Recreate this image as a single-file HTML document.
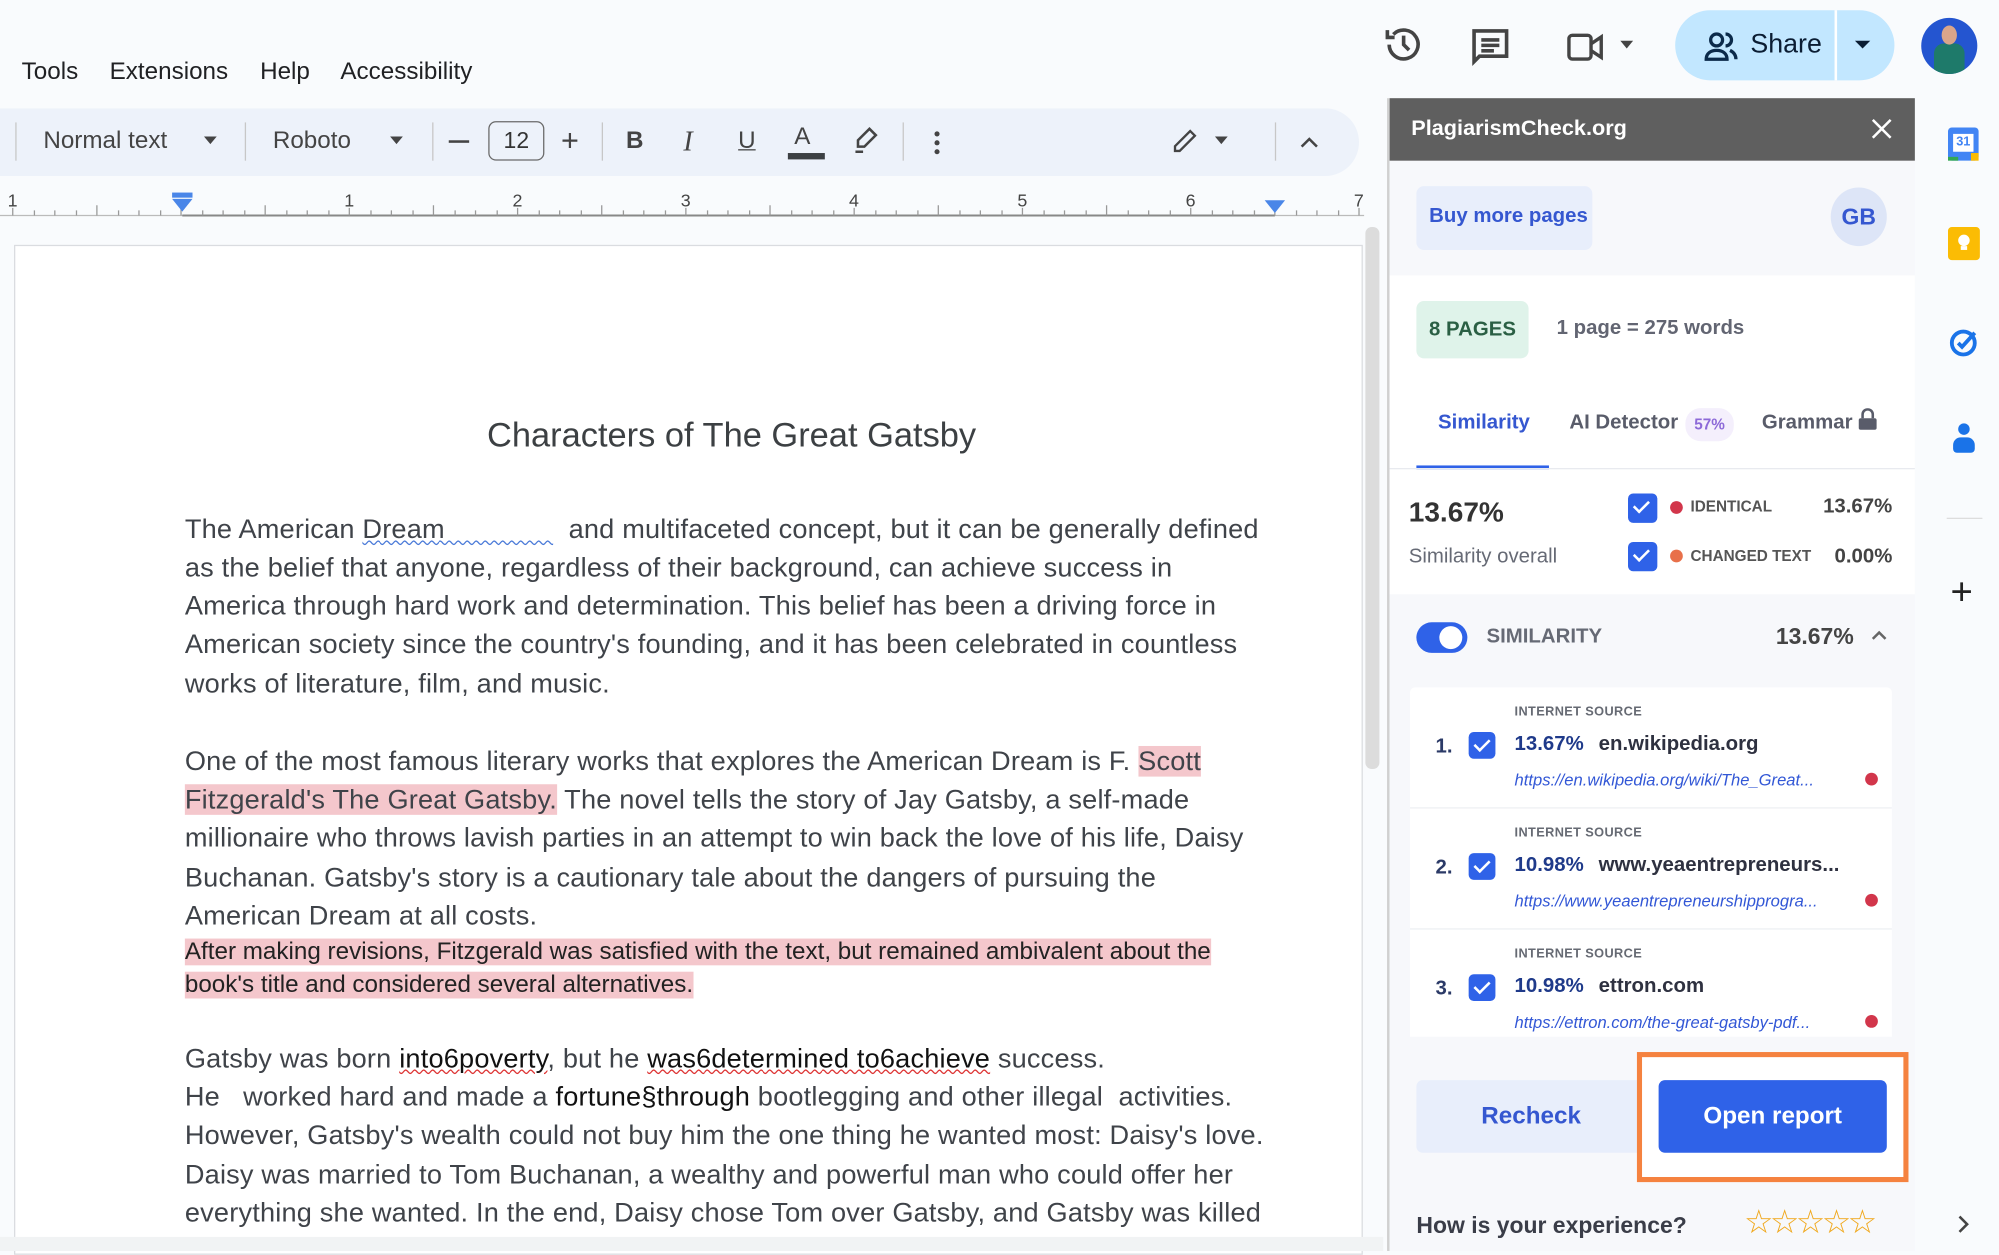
<!DOCTYPE html>
<html><head><meta charset="utf-8"><style>
html,body{margin:0;padding:0;width:1999px;height:1251px;overflow:hidden;background:#f9fbfd;}
#w{position:absolute;left:0;top:0;width:1568px;height:981px;transform:scale(1.27487,1.2752);transform-origin:0 0;font-family:"Liberation Sans",Arial,sans-serif;color:#3c4043;}
.a{position:absolute;white-space:nowrap;}
.ln{position:absolute;left:145px;font-size:21.3px;letter-spacing:0.15px;color:#3f4349;white-space:nowrap;}
.hl{background:#f4c7cc;}
.tb{position:absolute;top:111px;font-size:19px;color:#444;transform:translateY(-50%);}
.sep{position:absolute;top:96px;width:1px;height:30px;background:#c7c7c7;}
.cb{position:absolute;width:21px;height:21px;border-radius:4px;background:#2f62e8;}
.cb:after{content:"";position:absolute;left:7px;top:3px;width:5px;height:10px;border:solid #fff;border-width:0 2.5px 2.5px 0;transform:rotate(45deg);}
.src{position:absolute;left:1106px;width:378px;height:94px;background:#fff;border-bottom:1px solid #eceef2;}
.srcl{position:absolute;left:82px;top:14px;font-size:10px;font-weight:bold;color:#666a73;letter-spacing:.3px;}
.num{position:absolute;left:20px;top:38px;font-size:16px;font-weight:bold;color:#2b3a67;}
.pc{position:absolute;left:82px;top:36px;font-size:16px;font-weight:bold;color:#1f3a8a;}
.dom{position:absolute;left:148px;top:36px;font-size:16px;font-weight:bold;color:#2e3140;}
.url{position:absolute;left:82px;top:65px;font-size:13px;font-style:italic;color:#3257d6;}
.rd{position:absolute;left:357px;top:67px;width:10px;height:10px;border-radius:50%;background:#d2364b;}
</style></head><body><div id="w">
<div class="a" style="left:17px;top:46px;font-size:19px;color:#202124;">Tools</div>
<div class="a" style="left:86px;top:46px;font-size:19px;color:#202124;">Extensions</div>
<div class="a" style="left:204px;top:46px;font-size:19px;color:#202124;">Help</div>
<div class="a" style="left:267px;top:46px;font-size:19px;color:#202124;">Accessibility</div>
<svg class="a" style="left:1084px;top:18px" width="34" height="34" viewBox="0 0 24 24" fill="none" stroke="#444" stroke-width="2"><path d="M4 12a8 8 0 1 0 2.3-5.7"/><path d="M3 4v4h4"/><path d="M12 7v5l3 3"/></svg>
<svg class="a" style="left:1152px;top:20px" width="34" height="34" viewBox="0 0 24 24" fill="none" stroke="#444" stroke-width="2"><path d="M3 3h18v14H6l-3 3z" fill="none"/><path d="M7 8h10M7 11h10M7 14h7"/></svg>
<svg class="a" style="left:1228px;top:22px" width="32" height="30" viewBox="0 0 24 22" fill="none" stroke="#444" stroke-width="2"><rect x="2" y="4" width="13" height="14" rx="2"/><path d="M15 9l6-4v12l-6-4"/></svg>
<div class="a" style="left:1271px;top:32px;border:5px solid transparent;border-top:6px solid #444;"></div>
<div class="a" style="left:1314px;top:8px;width:172px;height:55px;border-radius:28px;background:#c2e7ff;"></div>
<div class="a" style="left:1439px;top:8px;width:2px;height:55px;background:#fff;"></div>
<svg class="a" style="left:1336px;top:23px" width="28" height="26" viewBox="0 0 24 22" fill="none" stroke="#0b2a4a" stroke-width="2.2"><circle cx="9" cy="7" r="4"/><path d="M2 20c0-4 3-6 7-6s7 2 7 6z"/><path d="M15 3a4 4 0 0 1 0 8M18 14c2 1 4 3 4 6"/></svg>
<div class="a" style="left:1373px;top:23px;font-size:21px;color:#0b1d33;">Share</div>
<div class="a" style="left:1455px;top:32px;border:6px solid transparent;border-top:6px solid #0b1d33;"></div>
<div class="a" style="left:1507px;top:14px;width:44px;height:44px;border-radius:50%;background:#2455d0;overflow:hidden;"><div style="position:absolute;left:10px;top:20px;width:24px;height:26px;border-radius:8px 8px 0 0;background:#1e7a6a;"></div><div style="position:absolute;left:16px;top:6px;width:12px;height:15px;border-radius:50%;background:#d9a58a;"></div></div>
<div class="a" style="left:0;top:85px;width:1066px;height:53px;background:#edf2fa;border-radius:0 27px 27px 0;"></div>
<div class="sep" style="left:12px"></div>
<div class="tb" style="left:34px">Normal text</div>
<div class="a" style="left:160px;top:107px;border:5px solid transparent;border-top:6px solid #444;"></div>
<div class="sep" style="left:192px"></div>
<div class="tb" style="left:214px">Roboto</div>
<div class="a" style="left:306px;top:107px;border:5px solid transparent;border-top:6px solid #444;"></div>
<div class="sep" style="left:339px"></div>
<div class="a" style="left:352px;top:110px;width:16px;height:2px;background:#444;"></div>
<div class="a" style="left:383px;top:95px;width:44px;height:31px;border:1.5px solid #6a6a6a;border-radius:6px;box-sizing:border-box;font-size:18px;text-align:center;line-height:28px;color:#333;">12</div>
<div class="tb" style="left:440px;font-size:24px">+</div>
<div class="sep" style="left:472px"></div>
<div class="tb" style="left:491px;font-weight:bold;">B</div>
<div class="tb" style="left:536px;font-style:italic;font-family:'Liberation Serif',serif;font-size:22px;">I</div>
<div class="tb" style="left:579px;text-decoration:underline;">U</div>
<div class="tb" style="left:623px;top:108px;">A</div>
<div class="a" style="left:618px;top:120px;width:29px;height:5px;background:#3c4043;"></div>
<svg class="a" style="left:667px;top:98px" width="24" height="24" viewBox="0 0 24 24" fill="none" stroke="#444" stroke-width="2"><path d="M15 3l5 5-9 9H6v-5z"/><path d="M4 21h6"/></svg>
<div class="sep" style="left:708px"></div>
<div class="a" style="left:733px;top:103px;width:4px;height:4px;border-radius:50%;background:#444;box-shadow:0 7px 0 #444,0 14px 0 #444;"></div>
<svg class="a" style="left:918px;top:100px" width="22" height="22" viewBox="0 0 24 24" fill="none" stroke="#444" stroke-width="2"><path d="M17 3l4 4L8 20H4v-4z"/></svg>
<div class="a" style="left:953px;top:107px;border:5px solid transparent;border-top:6px solid #444;"></div>
<div class="sep" style="left:1000px"></div>
<svg class="a" style="left:1018px;top:104px" width="18" height="14" viewBox="0 0 18 14" fill="none" stroke="#444" stroke-width="2"><path d="M3 11l6-6 6 6"/></svg>
<div class="a" style="left:0;top:143px;width:1075px;height:30px;">
<svg width="1075" height="30">
<line x1="0" y1="26" x2="1070" y2="26" stroke="#bbb" stroke-width="1"/>
<line x1="143" y1="26" x2="1000" y2="26" stroke="#888" stroke-width="1.5"/>
<g stroke="#999" stroke-width="1">
<path d="M10 20v6M27 22v4M43 22v4M60 22v4M76 18v8M93 22v4M109 22v4M126 22v4M142 20v6M159 22v4M175 22v4M192 22v4M208 18v8M225 22v4M241 22v4M258 22v4M274 20v6M291 22v4M307 22v4M324 22v4M340 18v8M357 22v4M373 22v4M390 22v4M406 20v6M423 22v4M439 22v4M456 22v4M472 18v8M489 22v4M505 22v4M522 22v4M538 20v6M555 22v4M571 22v4M588 22v4M604 18v8M621 22v4M637 22v4M654 22v4M670 20v6M687 22v4M703 22v4M720 22v4M736 18v8M753 22v4M769 22v4M786 22v4M802 20v6M819 22v4M835 22v4M852 22v4M868 18v8M885 22v4M901 22v4M918 22v4M934 20v6M951 22v4M967 22v4M984 22v4M1000 18v8M1017 22v4M1033 22v4M1050 22v4M1066 20v6"/>
</g>
<g font-size="14" fill="#444" font-family="Liberation Sans"><text x="6" y="19">1</text><text x="270" y="19">1</text><text x="402" y="19">2</text><text x="534" y="19">3</text><text x="666" y="19">4</text><text x="798" y="19">5</text><text x="930" y="19">6</text><text x="1062" y="19">7</text></g>
<rect x="135" y="8" width="16" height="4" fill="#4a86e8"/><path d="M135 13h16l-8 10z" fill="#4a86e8"/>
<path d="M992 14h16l-8 10z" fill="#4a86e8"/>
</svg></div>
<div class="a" style="left:11px;top:192px;width:1056px;height:790px;background:#fff;border:1px solid #dadce0;"></div>
<div class="a" style="left:1071px;top:178px;width:11px;height:425px;background:#dcdcdc;border-radius:5px;"></div>
<div class="a" style="left:382px;top:326px;font-size:27px;color:#3c4043;">Characters of The Great Gatsby</div>
<div class="ln" style="top:403px">The American <span style="text-decoration:underline wavy #4a7ad8;text-decoration-thickness:1px;">Dream&nbsp;&nbsp;&nbsp;&nbsp;&nbsp;&nbsp;&nbsp;&nbsp;&nbsp;&nbsp;&nbsp;&nbsp;&nbsp;&nbsp;</span>&nbsp;&nbsp;and multifaceted concept, but it can be generally defined</div>
<div class="ln" style="top:433px">as the belief that anyone, regardless of their background, can achieve success in</div>
<div class="ln" style="top:463px">America through hard work and determination. This belief has been a driving force in</div>
<div class="ln" style="top:493px">American society since the country's founding, and it has been celebrated in countless</div>
<div class="ln" style="top:524px">works of literature, film, and music.</div>
<div class="ln" style="top:585px">One of the most famous literary works that explores the American Dream is F. <span class="hl">Scott</span></div>
<div class="ln" style="top:615px"><span class="hl">Fitzgerald's The Great Gatsby.</span> The novel tells the story of Jay Gatsby, a self-made</div>
<div class="ln" style="top:645px">millionaire who throws lavish parties in an attempt to win back the love of his life, Daisy</div>
<div class="ln" style="top:676px">Buchanan. Gatsby's story is a cautionary tale about the dangers of pursuing the</div>
<div class="ln" style="top:706px">American Dream at all costs.</div>
<div class="ln" style="top:736px;font-size:19px;letter-spacing:0;color:#222;"><span class="hl">After making revisions, Fitzgerald was satisfied with the text, but remained ambivalent about the</span></div>
<div class="ln" style="top:762px;font-size:19px;letter-spacing:0;color:#222;"><span class="hl">book's title and considered several alternatives.</span></div>
<div class="ln" style="top:818px">Gatsby was born <span style="color:#111;text-decoration:underline wavy #d33;text-decoration-thickness:1px;">into6poverty</span>, but he <span style="color:#111;text-decoration:underline wavy #d33;text-decoration-thickness:1px;">was6determined to6achieve</span> success.</div>
<div class="ln" style="top:848px">He &nbsp;&nbsp;worked hard and made a <span style="color:#111">fortune§through</span> bootlegging and other illegal &nbsp;activities.</div>
<div class="ln" style="top:878px">However, Gatsby's wealth could not buy him the one thing he wanted most: Daisy's love.</div>
<div class="ln" style="top:909px">Daisy was married to Tom Buchanan, a wealthy and powerful man who could offer her</div>
<div class="ln" style="top:939px">everything she wanted. In the end, Daisy chose Tom over Gatsby, and Gatsby was killed</div>
<div class="a" style="left:0;top:970px;width:1085px;height:11px;background:#f1f3f4;"></div>
<div class="a" style="left:1088px;top:77px;width:2px;height:904px;background:#d0d0d0;"></div>
<div class="a" style="left:1090px;top:77px;width:412px;height:904px;background:#f7f8fb;"></div>
<div class="a" style="left:1090px;top:77px;width:412px;height:49px;background:#5f5f5f;"></div>
<div class="a" style="left:1107px;top:91px;font-size:17px;font-weight:bold;color:#fff;">PlagiarismCheck.org</div>
<svg class="a" style="left:1467px;top:92px" width="18" height="18" viewBox="0 0 18 18" stroke="#fff" stroke-width="2"><path d="M2 2l14 14M16 2L2 16"/></svg>
<div class="a" style="left:1111px;top:146px;width:138px;height:50px;background:#e8eefb;border-radius:6px;"></div>
<div class="a" style="left:1121px;top:161px;font-size:16px;font-weight:bold;color:#3557d0;">Buy more pages</div>
<div class="a" style="left:1436px;top:147px;width:44px;height:46px;border-radius:50%;background:#dde5f7;font-size:18px;font-weight:bold;color:#3557d0;text-align:center;line-height:46px;">GB</div>
<div class="a" style="left:1090px;top:216px;width:412px;height:250px;background:#fff;"></div>
<div class="a" style="left:1111px;top:236px;width:88px;height:45px;background:#dff3ea;border-radius:6px;font-size:16px;font-weight:bold;color:#2a5f44;text-align:center;line-height:45px;">8 PAGES</div>
<div class="a" style="left:1221px;top:249px;font-size:16px;font-weight:bold;color:#626572;">1 page = 275 words</div>
<div class="a" style="left:1128px;top:323px;font-size:16px;font-weight:bold;color:#3557d0;">Similarity</div>
<div class="a" style="left:1111px;top:365px;width:104px;height:3px;background:#2f62e8;"></div>
<div class="a" style="left:1090px;top:367px;width:412px;height:1px;background:#e8eaef;"></div>
<div class="a" style="left:1231px;top:323px;font-size:16px;font-weight:bold;color:#595c6a;">AI Detector</div>
<div class="a" style="left:1322px;top:320px;width:38px;height:26px;border-radius:12px;background:#f4effc;font-size:12px;font-weight:bold;color:#8d6ad8;text-align:center;line-height:26px;">57%</div>
<div class="a" style="left:1382px;top:323px;font-size:16px;font-weight:bold;color:#595c6a;">Grammar</div>
<svg class="a" style="left:1457px;top:320px" width="16" height="18" viewBox="0 0 16 18"><path d="M4 8V5a4 4 0 0 1 8 0v3" stroke="#595c6a" stroke-width="2" fill="none"/><rect x="1" y="8" width="14" height="9" rx="1.5" fill="#595c6a"/></svg>
<div class="a" style="left:1105px;top:389px;font-size:22px;font-weight:bold;color:#333;">13.67%</div>
<div class="a" style="left:1105px;top:428px;font-size:16px;color:#666a75;">Similarity overall</div>
<div class="cb" style="left:1277px;top:387px;width:23px;height:23px;"></div>
<div class="cb" style="left:1277px;top:425px;width:23px;height:23px;"></div>
<div class="a" style="left:1310px;top:393px;width:10px;height:10px;border-radius:50%;background:#d2364b;"></div>
<div class="a" style="left:1310px;top:431px;width:10px;height:10px;border-radius:50%;background:#e8704a;"></div>
<div class="a" style="left:1326px;top:390px;font-size:12px;font-weight:bold;color:#555;">IDENTICAL</div>
<div class="a" style="left:1326px;top:429px;font-size:12px;font-weight:bold;color:#555;">CHANGED TEXT</div>
<div class="a" style="left:1430px;top:389px;font-size:16px;font-weight:bold;color:#444;">13.67%</div>
<div class="a" style="left:1439px;top:428px;font-size:16px;font-weight:bold;color:#444;">0.00%</div>
<div class="a" style="left:1111px;top:488px;width:40px;height:24px;border-radius:12px;background:#2f62e8;"></div>
<div class="a" style="left:1129px;top:491px;width:18px;height:18px;border-radius:50%;background:#fff;"></div>
<div class="a" style="left:1166px;top:491px;font-size:16px;font-weight:bold;color:#666a75;">SIMILARITY</div>
<div class="a" style="left:1393px;top:489px;font-size:18px;font-weight:bold;color:#444;">13.67%</div>
<svg class="a" style="left:1467px;top:493px" width="14" height="10" viewBox="0 0 14 10" fill="none" stroke="#666" stroke-width="2"><path d="M2 8l5-5 5 5"/></svg>
<div class="src" style="top:539px;border-radius:4px 4px 0 0;"><div class="srcl">INTERNET SOURCE</div><div class="num">1.</div><div class="cb" style="left:46px;top:35px;"></div><div class="pc">13.67%</div><div class="dom">en.wikipedia.org</div><div class="url">https://en.wikipedia.org/wiki/The_Great...</div><div class="rd"></div></div>
<div class="src" style="top:634px;"><div class="srcl">INTERNET SOURCE</div><div class="num">2.</div><div class="cb" style="left:46px;top:35px;"></div><div class="pc">10.98%</div><div class="dom">www.yeaentrepreneurs...</div><div class="url">https://www.yeaentrepreneurshipprogra...</div><div class="rd"></div></div>
<div class="src" style="top:729px;height:84px;border-bottom:0;"><div class="srcl">INTERNET SOURCE</div><div class="num">3.</div><div class="cb" style="left:46px;top:35px;"></div><div class="pc">10.98%</div><div class="dom">ettron.com</div><div class="url">https://ettron.com/the-great-gatsby-pdf...</div><div class="rd"></div></div>
<div class="a" style="left:1111px;top:847px;width:180px;height:57px;background:#e8eefb;border-radius:5px;font-size:19px;font-weight:bold;color:#3557d0;text-align:center;line-height:57px;">Recheck</div>
<div class="a" style="left:1284px;top:825px;width:213px;height:102px;border:4px solid #f5823f;box-sizing:border-box;background:#fff;"></div>
<div class="a" style="left:1301px;top:847px;width:179px;height:57px;background:#2f62e8;border-radius:5px;font-size:19px;font-weight:bold;color:#fff;text-align:center;line-height:57px;">Open report</div>
<div class="a" style="left:1111px;top:951px;font-size:18px;font-weight:bold;color:#3a3d48;">How is your experience?</div>
<div class="a" style="left:1368px;top:943px;font-size:26px;color:#f0a81c;letter-spacing:-3px;">☆☆☆☆☆</div>
<svg class="a" style="left:1534px;top:952px" width="12" height="16" viewBox="0 0 12 16" fill="none" stroke="#444" stroke-width="2"><path d="M3 2l6 6-6 6"/></svg>
<div class="a" style="left:1528px;top:100px;width:24px;height:26px;border-radius:3px;background:#4285f4;"><div style="position:absolute;left:4px;top:5px;width:16px;height:14px;background:#fff;font-size:10px;font-weight:bold;color:#4285f4;text-align:center;line-height:14px;">31</div><div style="position:absolute;left:0;bottom:0;width:8px;height:3px;background:#34a853"></div><div style="position:absolute;right:0;bottom:0;width:6px;height:6px;background:#fbbc04"></div></div>
<div class="a" style="left:1528px;top:178px;width:25px;height:26px;border-radius:3px;background:#fbbc04;"><div style="position:absolute;left:8px;top:6px;width:9px;height:9px;border-radius:50%;background:#fff;"></div><div style="position:absolute;left:10px;top:15px;width:5px;height:3px;background:#fff;"></div></div>
<svg class="a" style="left:1528px;top:255px" width="26" height="26" viewBox="0 0 26 26" fill="none" stroke="#1a73e8" stroke-width="3"><circle cx="12" cy="14" r="9"/><path d="M8 14l3 3 10-11"/></svg>
<div class="a" style="left:1536px;top:332px;width:9px;height:9px;border-radius:50%;background:#1a73e8;"></div>
<div class="a" style="left:1532px;top:343px;width:17px;height:12px;border-radius:6px 6px 3px 3px;background:#1a73e8;"></div>
<div class="a" style="left:1527px;top:406px;width:28px;height:1px;background:#ddd;"></div>
<div class="a" style="left:1530px;top:448px;font-size:30px;color:#222;line-height:34px;">+</div>
</div></body></html>
